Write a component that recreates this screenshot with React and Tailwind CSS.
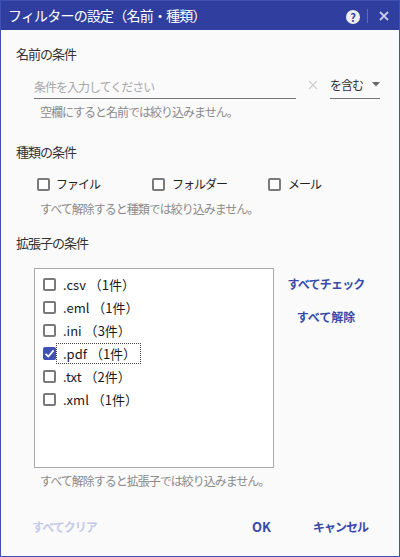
import React from "react";

const FONT = { fontFamily: '"Noto Sans CJK JP", "Noto Sans", sans-serif' };

function Box({ checked }) {
  if (checked) {
    return (
      <span className="w-[13px] h-[13px] rounded-[2px] bg-[#3f51b5] flex items-center justify-center shrink-0">
        <svg width="11" height="11" viewBox="0 0 11 11">
          <path d="M1.5 5.8 L4.3 8.5 L9.6 2.4" fill="none" stroke="#ffffff" strokeWidth="1.8" />
        </svg>
      </span>
    );
  }
  return <span className="w-[13px] h-[13px] rounded-[2px] border-2 border-[#7a7a7a] bg-white shrink-0" />;
}

const exts = [
  { n: ".csv", c: "1" },
  { n: ".eml", c: "1" },
  { n: ".ini", c: "3" },
  { n: ".pdf", c: "1", checked: true, focus: true },
  { n: ".txt", c: "2" },
  { n: ".xml", c: "1" },
];

export default function App() {
  return (
    <div style={FONT} className="w-[400px] h-[557px] flex flex-col border border-[#3f51b5] bg-[#fafafa] overflow-hidden">
      <div className="h-[29px] shrink-0 bg-[#303f9f] flex items-center pl-[7px] pr-[10px] text-white">
        <span className="text-[14px] leading-[20px] tracking-[-0.8px] mt-[-1px]">フィルターの設定（名前・種類）</span>
        <span className="ml-auto w-[14px] h-[14px] rounded-full bg-[#eeeeee] text-[#303f9f] text-[11px] font-bold leading-[14px] text-center mt-[2px]">?</span>
        <span className="ml-[7px] w-px h-[14px] bg-[#5c6bc0]" />
        <svg className="ml-[11px] mt-[1px]" width="10" height="10" viewBox="0 0 10 10">
          <path d="M1 1 L9 9 M9 1 L1 9" stroke="#c5cae9" strokeWidth="1.8" />
        </svg>
      </div>

      <div className="flex flex-col px-[15px] pt-[14px] flex-1">
        <div className="h-[20px] leading-[20px] text-[13px] tracking-[-1px] text-[#333]">名前の条件</div>

        <div className="mt-[8px] h-[27px] flex items-end">
          <div className="ml-[18px] w-[262px] h-[27px] border-b border-[#757575] flex items-center pt-[3px]">
            <span className="text-[12px] tracking-[-1px] text-[#a8a8a8]">条件を入力してください</span>
          </div>
          <div className="w-[34px] h-[27px] flex items-center justify-center pb-[2px]">
            <svg width="10" height="10" viewBox="0 0 10 10">
              <path d="M1 1 L9 9 M9 1 L1 9" stroke="#cfcfcf" strokeWidth="1.2" />
            </svg>
          </div>
          <div className="w-[50px] h-[27px] border-b border-[#757575] flex items-center pb-[1px]">
            <span className="text-[12px] tracking-[-1px] text-[#333]">を含む</span>
            <svg className="ml-auto" width="8" height="5" viewBox="0 0 8 5">
              <path d="M0 0 L8 0 L4 4.5 Z" fill="#666" />
            </svg>
          </div>
        </div>

        <div className="mt-[4px] pl-[24px] h-[18px] leading-[18px] text-[12px] tracking-[-1px] text-[#8a8a8a]">空欄にすると名前では絞り込みません。</div>

        <div className="mt-[21px] h-[20px] leading-[20px] text-[13px] tracking-[-1px] text-[#333]">種類の条件</div>

        <div className="mt-[12px] h-[20px] flex items-center ml-[21px]">
          <div className="w-[115px] flex items-center">
            <Box />
            <span className="ml-[6px] text-[12px] tracking-[-1px] text-[#222]">ファイル</span>
          </div>
          <div className="w-[116px] flex items-center">
            <Box />
            <span className="ml-[7px] text-[12px] tracking-[-1px] text-[#222]">フォルダー</span>
          </div>
          <div className="flex items-center">
            <Box />
            <span className="ml-[7px] text-[12px] tracking-[-1px] text-[#222]">メール</span>
          </div>
        </div>

        <div className="mt-[6px] pl-[24px] h-[18px] leading-[18px] text-[12px] tracking-[-1px] text-[#8a8a8a]">すべて解除すると種類では絞り込みません。</div>

        <div className="mt-[15px] h-[20px] leading-[20px] text-[13px] tracking-[-1px] text-[#333]">拡張子の条件</div>

        <div className="mt-[15px] flex">
          <div className="ml-[18px] w-[240px] h-[200px] border border-[#a8a8a8] bg-white pt-[4px] pl-[8px] flex flex-col">
            {exts.map((e) => (
              <div key={e.n} className="h-[23px] flex items-center">
                <Box checked={e.checked} />
                <span
                  className={
                    "h-[21px] flex items-center pl-[6px] pr-[4px] border text-[13px] text-[#1a1a1a] " +
                    (e.focus ? "border-dotted border-[#444]" : "border-transparent")
                  }
                >
                  {e.n} （{e.c}件）
                </span>
              </div>
            ))}
          </div>
          <div className="ml-[6px] w-[92px] flex flex-col items-center pt-[6px]">
            <span className="h-[20px] leading-[20px] text-[12px] font-bold tracking-[-0.8px] text-[#3949ab]">すべてチェック</span>
            <span className="mt-[13px] h-[20px] leading-[20px] text-[12px] font-bold tracking-[0px] text-[#3949ab]">すべて解除</span>
          </div>
        </div>

        <div className="mt-[4px] pl-[24px] h-[18px] leading-[18px] text-[12px] tracking-[-1px] text-[#8a8a8a]">すべて解除すると拡張子では絞り込みません。</div>

        <div className="mt-[22px] h-[30px] flex items-center">
          <span className="ml-[16px] text-[12px] font-bold tracking-[-1px] text-[#c5cae9]">すべてクリア</span>
          <span className="ml-auto text-[13px] font-bold text-[#3949ab]">OK</span>
          <span className="ml-[42px] mr-[16px] text-[12px] font-bold tracking-[-1px] text-[#3949ab]">キャンセル</span>
        </div>
      </div>
    </div>
  );
}
